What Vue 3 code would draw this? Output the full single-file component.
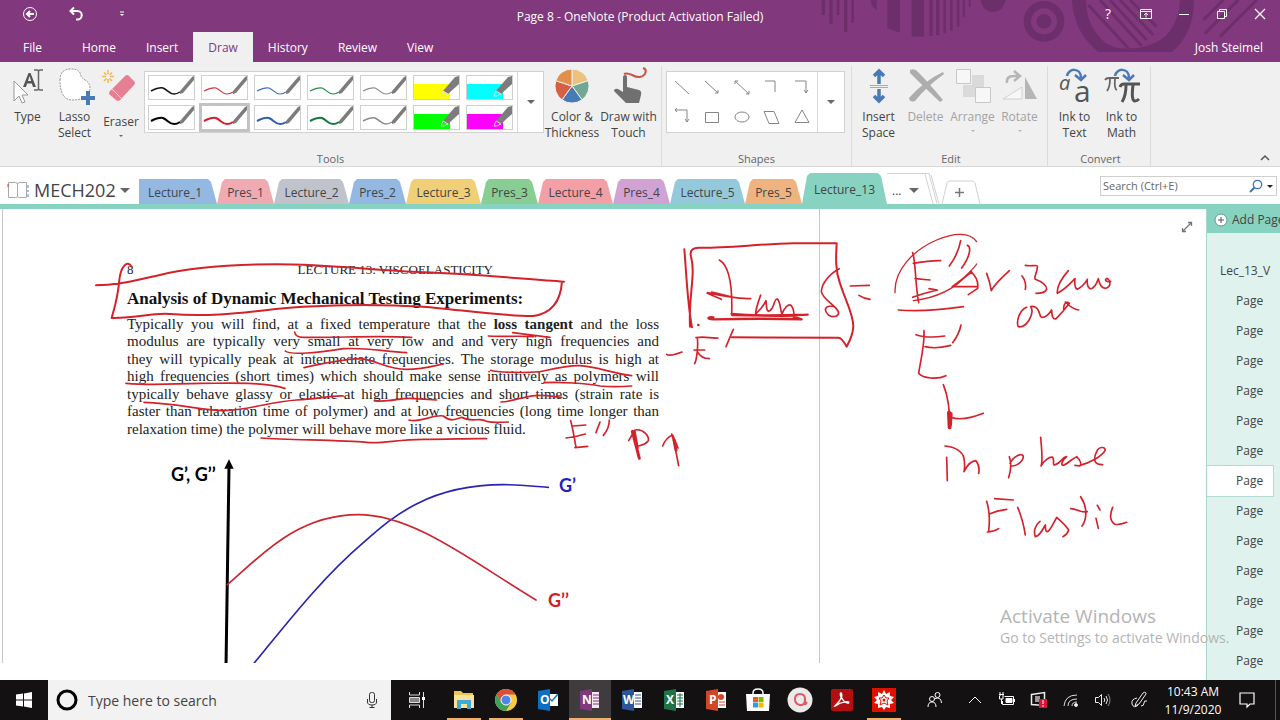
<script setup>
const ribbonTabs = ['Home', 'Insert', 'Draw', 'History', 'Review', 'View']

const pens = [
  { name: 'Black pen', color: '#111', w: 1.5 },
  { name: 'Red pen', color: '#d8323c', w: 1.2 },
  { name: 'Blue pen', color: '#3b6fc0', w: 1.2 },
  { name: 'Green pen', color: '#1f8a4a', w: 1.2 },
  { name: 'Gray pen', color: '#8b8b8b', w: 1.2 },
  { name: 'Yellow highlighter', color: '#ffff00', marker: true },
  { name: 'Cyan highlighter', color: '#00ffff', marker: true },
  { name: 'Thick black pen', color: '#000', w: 2 },
  { name: 'Thick red pen', color: '#d0202c', w: 2, selected: true },
  { name: 'Thick blue pen', color: '#2f5fb5', w: 2 },
  { name: 'Thick green pen', color: '#177a3c', w: 2 },
  { name: 'Thick gray pen', color: '#8b8b8b', w: 1.5 },
  { name: 'Green highlighter', color: '#00ff00', marker: true },
  { name: 'Magenta highlighter', color: '#ff00ff', marker: true },
]

const shapes = [
  { name: 'Line', d: 'M4 5 L18 18' },
  { name: 'Arrow', d: 'M4 5 L17 17 M17 14 V17 H14' },
  { name: 'Double arrow', d: 'M4 5 L18 18 M4 8 V5 H7 M18 15 V18 H15' },
  { name: 'Elbow', d: 'M4 5 H14 V16' },
  { name: 'Elbow arrow', d: 'M4 5 H15 V17 M13 14 L15 17 L17 14' },
  { name: 'Elbow double arrow', d: 'M4 4 H16 V16 M14 13 L16 16 L18 13 M6 2 L4 4 L6 6' },
  { name: 'Rectangle', d: 'M4.500 6.500 H17.500 V16.500 H4.500 Z' },
  { name: 'Ellipse', d: 'M4 11 A7 5 0 0 1 18 11 A7 5 0 0 1 4 11 Z' },
  { name: 'Parallelogram', d: 'M3 5.500 H13 L18 17.500 H8 Z' },
  { name: 'Triangle', d: 'M11 4 L18 16.500 H4 Z' },
]

const sections = [
  { name: 'Lecture_1', color: '#93b8e2', kind: 'first' },
  { name: 'Pres_1', color: '#efabb1', kind: 'small' },
  { name: 'Lecture_2', color: '#c0c3cb', kind: 'large' },
  { name: 'Pres_2', color: '#93b8e2', kind: 'small' },
  { name: 'Lecture_3', color: '#f0cf76', kind: 'large' },
  { name: 'Pres_3', color: '#88cd92', kind: 'small' },
  { name: 'Lecture_4', color: '#f2a0a6', kind: 'large' },
  { name: 'Pres_4', color: '#d2a2d5', kind: 'small' },
  { name: 'Lecture_5', color: '#93c9da', kind: 'large' },
  { name: 'Pres_5', color: '#efb37f', kind: 'small' },
  { name: 'Lecture_13', color: '#87d2c0', kind: 'current' },
]

const pages = Array.from({ length: 13 }, (_, i) => ({ id: i, selected: i === 6 }))
</script>

<template>
  <div class="window">
    <header class="top">
      <svg class="pattern" width="490" height="62" viewBox="0 0 1470 186" aria-hidden="true">
        <g fill="#6d2f6b">
          <path d="M95 0h10v45h-10zM118 0h10v72h-10zM140 0h8v45h-8zM162 0h10v96h-10zM184 0h8v68h-8zM242 0h18v32q-18-14-18-32zM292 0h38v98l-38-14zM365 0h37v110h-37zM418 0h10v108h-10zM438 0h10v106h-10zM460 0h8v100h-8zM480 0h8v92h-8zM500 0h8v80h-8zM518 0h7v50h-7zM536 0h6v20h-6z" />
          <path d="M572 0h75q-8 36-38 36t-37-36z" />
          <circle cx="762" cy="64" r="22" />
          <path d="M846 0h42q0 80 60 130 30 18 60 15 90 0 130-50 30-40 32-95h42q0 100-66 156H925Q850 95 846 0z" />
        </g>
        <circle cx="762" cy="64" r="50" fill="none" stroke="#6d2f6b" stroke-width="22" />
        <path d="M895 15l120 130M930 0l125 138M960 0l110 120M990 0l100 105M1020 0l80 80M1240 60l60-60M1245 100l100-100M1290 110L1400 0" stroke="#6d2f6b" stroke-width="9" />
      </svg>
      <div class="titlebar">
        <div class="quick">
          <button class="plain" aria-label="Back">
            <svg width="16" height="16" viewBox="0 0 16 16" fill="none" stroke="#fff"><circle cx="8" cy="8" r="6.500" /><path d="M12 8H5M8 5L5 8l3 3" stroke-width="2" /></svg>
          </button>
          <button class="plain" aria-label="Undo">
            <svg width="16" height="16" viewBox="0 0 16 16" fill="none" stroke="#fff" stroke-width="2"><path d="M6 1.500L2.500 5 6 8.500M3 5h6.500a4 4 0 0 1 0 8.500H8" /></svg>
          </button>
          <button class="plain" aria-label="Customize quick access">
            <svg width="8" height="8" viewBox="0 0 8 8"><path d="M2 2h4" stroke="#fff" /><path d="M2 4h4L4 6z" fill="#fff" /></svg>
          </button>
        </div>
        <div class="title">Page 8 - OneNote (Product Activation Failed)</div>
        <div class="controls">
          <button class="plain help" aria-label="Help">?</button>
          <button class="plain" aria-label="Ribbon display options">
            <svg width="14" height="12" viewBox="0 0 14 12" fill="none" stroke="#fff"><path d="M1.500 1.500h11v9h-11zM1.500 3.500h11M7 9.500V5.500M5 7l2-2 2 2" /></svg>
          </button>
          <button class="plain" aria-label="Minimize"><svg width="12" height="12" viewBox="0 0 12 12"><path d="M1 6.500h10" stroke="#fff" /></svg></button>
          <button class="plain" aria-label="Restore"><svg width="12" height="12" viewBox="0 0 12 12" fill="none" stroke="#fff"><path d="M1.500 3.500h7v7h-7zM3.500 3.500v-2h7v7h-2" /></svg></button>
          <button class="plain" aria-label="Close"><svg width="12" height="12" viewBox="0 0 12 12"><path d="M1 1l10 10M11 1L1 11" stroke="#fff" stroke-width="1.200" /></svg></button>
        </div>
      </div>
      <nav class="tabs">
        <button class="tab file">File</button>
        <button v-for="t in ribbonTabs" :key="t" class="tab" :class="{ active: t === 'Draw' }">{{ t }}</button>
        <span class="user">Josh Steimel</span>
      </nav>
    </header>

    <div class="ribbon">
      <section class="group tools">
        <div class="items">
          <button class="tool">
            <svg width="40" height="40" viewBox="0 0 40 40">
              <path d="M6 14v20l5-5 3 7 3-1-3-7h6z" fill="#fff" stroke="#999" />
              <path d="M15 20L20.500 6h2L28 20h-3l-1.200-3.500h-4.700L18 20zM20 14h3.200L21.500 9z" fill="#555" />
              <path d="M26 3h3q1.500 0 1.500 2v16q0 2-1.500 2h-3M35 3h-3q-1.500 0-1.500 2M35 23h-3q-1.500 0-1.500-2" fill="none" stroke="#666" stroke-width="1.500" />
            </svg>
            <span>Type</span>
          </button>
          <button class="tool">
            <svg width="40" height="40" viewBox="0 0 40 40">
              <path d="M5 13C5 6 9 2 15 2c8 0 10 2 11 7 1 4 9 4 9 12 0 9-9 12-18 12C8 33 5 24 5 13z" fill="#fff" stroke="#999" stroke-dasharray="2 1" />
              <path d="M31 24h4v5h5v4h-5v5h-4v-5h-5v-4h5z" fill="#4a7ab5" />
            </svg>
            <span>Lasso<br>Select</span>
          </button>
          <button class="tool eraser">
            <svg width="40" height="40" viewBox="0 0 40 40">
              <path d="M7 0v4M7 9v4M1 6.500h4M9 6.500h4M3 2.500l2.500 2.500M11 2.500L8.500 5M3 11l2.500-2.500M11 11L8.500 8.500" stroke="#efb84e" stroke-width="1.500" />
              <path d="M24 6q2-2 4 0l5 5q2 2 0 4L19 30q-2 2-4 0l-6-5q-2-2 0-4z" fill="#e57f93" />
              <path d="M11 19l9 9" stroke="#f9d8de" />
            </svg>
            <span>Eraser</span>
            <i class="caret tiny"></i>
          </button>
          <div class="gallery">
            <div class="cells pens">
              <button v-for="p in pens" :key="p.name" class="cell" :class="{ selected: p.selected }" :aria-label="p.name">
                <svg v-if="p.marker" width="45" height="23" viewBox="0 0 45 23">
                  <rect y="8" width="36" height="15" :fill="p.color" />
                  <path d="M45 0v8L34 18l-5-3L41 1z" fill="#7c7c7c" /><path d="M29 15l5 3-4 2h-3z" :fill="p.color" stroke="#ddd" />
                </svg>
                <svg v-else width="45" height="23" viewBox="0 0 45 23">
                  <path d="M2 15c4-2 8-4 12-3 5 2 6 6 11 6q3 0 6-2" fill="none" :stroke="p.color" :stroke-width="p.w" />
                  <path d="M45 0v4L34 17l-3 1 0-3L43 1z" fill="#7c7c7c" />
                </svg>
              </button>
            </div>
            <button class="more" aria-label="More pens"><i class="caret"></i></button>
          </div>
          <button class="tool wide">
            <svg width="40" height="40" viewBox="0 0 40 40" stroke="#f0f0f0">
              <path d="M20 19V2a17 17 0 0 1 16.200 11.700z" fill="#ecc27a" /><path d="M20 19l16.200-5.300A17 17 0 0 1 30 32.800z" fill="#72a893" />
              <path d="M20 19l10 13.800a17 17 0 0 1-20 0z" fill="#4a7ab5" /><path d="M20 19L10 32.800A17 17 0 0 1 3.800 13.700z" fill="#d65f46" /><path d="M20 19L3.800 13.700A17 17 0 0 1 20 2z" fill="#e38f4c" />
            </svg>
            <span>Color &amp;<br>Thickness</span>
          </button>
          <button class="tool wide">
            <svg width="40" height="40" viewBox="0 0 40 40">
              <path d="M14 10q0-2 2-2t2 2v10l12 3q3 1 2 5l-2 8H17L5 24q0-3 4-2l5 3z" fill="#707070" />
              <path d="M15 7c6-3 9 4 16 3 7-2 7-8 3-9" fill="none" stroke="#cc5442" stroke-width="2" />
            </svg>
            <span>Draw with<br>Touch</span>
          </button>
        </div>
        <div class="group-name">Tools</div>
      </section>
      <section class="group shapes">
        <div class="items">
          <div class="gallery">
            <div class="cells shape-cells">
              <button v-for="s in shapes" :key="s.name" class="shape" :aria-label="s.name">
                <svg width="22" height="22" viewBox="0 0 22 22"><path :d="s.d" fill="none" stroke="#858585" /></svg>
              </button>
            </div>
            <button class="more" aria-label="More shapes"><i class="caret"></i></button>
          </div>
        </div>
        <div class="group-name">Shapes</div>
      </section>
      <section class="group edit">
        <div class="items">
          <button class="tool">
            <svg width="40" height="40" viewBox="0 0 40 40" fill="none"><path d="M20 17V4M15 9l5-5 5 5M20 22v11M15 29l5 5 5-5" stroke="#4a7ab5" stroke-width="3.500" /><path d="M11 18.500h18M11 20.500h18" stroke="#aaa" /></svg>
            <span>Insert<br>Space</span>
          </button>
          <button class="tool off">
            <svg width="40" height="40" viewBox="0 0 40 40" fill="#adadad"><path d="M4 3q5-2 8 2 10 10 25 28l-3 2Q18 20 4 6zM3 31Q18 14 37 5l1 2Q20 20 9 34q-5 2-6-3z" /></svg>
            <span>Delete</span>
          </button>
          <button class="tool off">
            <svg width="40" height="40" viewBox="0 0 40 40"><path d="M19 8h12v12H19zM10 18h13v12H10z" fill="#dadada" /><path d="M3.500 2.500h14v14h-14zM22.500 20.500h15v15h-15z" fill="#f7f7f7" stroke="#c8c8c8" /></svg>
            <span>Arrange</span>
            <i class="caret tiny"></i>
          </button>
          <button class="tool off">
            <svg width="40" height="40" viewBox="0 0 40 40"><path d="M25 10v22h12z" fill="#b5b5b5" /><path d="M22 20v12H3z" fill="#f7f7f7" stroke="#d0d0d0" /><path d="M7 16c-1-8 6-7 11-7M14 4l6 5-6 5" fill="none" stroke="#b5b5b5" stroke-width="2.500" /></svg>
            <span>Rotate</span>
            <i class="caret tiny"></i>
          </button>
        </div>
        <div class="group-name">Edit</div>
      </section>
      <section class="group convert">
        <div class="items">
          <button class="tool">
            <svg class="spill" width="40" height="40" viewBox="0 0 40 40"><path d="M12 9c1-8 14-9 14 2M20 8l6 5 5-5" fill="none" stroke="#4a7ab5" stroke-width="2.500" /><text x="4" y="23" class="ga italic">a</text><text x="19" y="35" class="ga big">a</text></svg>
            <span>Ink to<br>Text</span>
          </button>
          <button class="tool">
            <svg width="40" height="40" viewBox="0 0 40 40"><path d="M13 9c1-8 14-9 14 2M21 8l6 5 5-5" fill="none" stroke="#4a7ab5" stroke-width="2.500" /><path d="M3 13q1-2 4-2h10M8 12q0 8-3 12M13 12q-1 10 2 11" fill="none" stroke="#666" stroke-width="1.800" /><path d="M18 20q1-3 4-3h16M24 18q0 11-4 17M31 18q-2 16 2 16 2 0 4-2" fill="none" stroke="#555" stroke-width="3" /></svg>
            <span>Ink to<br>Math</span>
          </button>
        </div>
        <div class="group-name">Convert</div>
      </section>
      <button class="collapse" aria-label="Collapse the ribbon"><svg width="10" height="8" viewBox="0 0 10 8"><path d="M1 6l4-4 4 4" fill="none" stroke="#555" stroke-width="1.500" /></svg></button>
    </div>

    <div class="sections">
      <button class="notebook">
        <svg width="24" height="20" viewBox="0 0 24 20" fill="none" stroke="#aaa"><path d="M2.500 2.500h7q2 0 2 2v12q0 1-2 1h-7zM20.500 2.500h-7q-2 0-2 2v12q0 1 2 1h7z" /><path d="M2 4v3" stroke="#d33" /><path d="M22 5v3M22 10v2M22 14v3" stroke="#48a" /></svg>
        <span>MECH202</span><i class="caret book"></i>
      </button>
      <button v-for="s in sections" :key="s.name" class="section-tab" :class="s.kind" :style="{ background: s.color }">{{ s.name }}</button>
      <button class="overflow" aria-label="More sections">
        <svg width="54" height="31" viewBox="0 0 54 31" fill="none" stroke="#d2d2d2"><path d="M0 .500h42l8 30M44 2l8 29M38 1l8 30" /></svg>
        <span>...</span><i class="caret section"></i>
      </button>
      <button class="new-section" aria-label="New section">
        <svg width="40" height="24" viewBox="0 0 40 24" fill="none"><path d="M1 24L6 3q1-2 3-2h22q2 0 3 2l5 21" stroke="#cfcfcf" /><path d="M18.500 8v9M14 12.500h9" stroke="#777" stroke-width="1.500" /></svg>
      </button>
      <form class="search" @submit.prevent>
        <input type="text" aria-label="Search" placeholder="Search (Ctrl+E)">
        <svg width="14" height="14" viewBox="0 0 14 14" fill="none" stroke="#3f73b8"><circle cx="8.500" cy="5.500" r="4.200" stroke-width="1.300" /><path d="M5.500 8.500L1 13" stroke-width="2" /></svg>
        <i class="caret dark"></i>
      </form>
    </div>

    <main class="workspace">
      <div class="canvas">
        <article class="paper">
          <div class="running"><span>8</span><span class="running-title">LECTURE 13: VISCOELASTICITY</span></div>
          <h1>Analysis of Dynamic Mechanical Testing Experiments:</h1>
          <p>
            <span>Typically you will find, at a fixed temperature that the <b>loss tangent</b> and the loss</span>
            <span>modulus are typically very small at very low and and very high frequencies and</span>
            <span>they will typically peak at intermediate frequencies. The storage modulus is high at</span>
            <span>high frequencies (short times) which should make sense intuitively as polymers will</span>
            <span>typically behave glassy or elastic at high frequencies and short times (strain rate is</span>
            <span>faster than relaxation time of polymer) and at low frequencies (long time longer than</span>
            <span class="last">relaxation time) the polymer will behave more like a vicious fluid.</span>
          </p>
        </article>
        <svg class="ink" width="1206" height="454" viewBox="0 209 1206 454" fill="none" stroke-linecap="round" stroke-linejoin="round">
          <g transform="translate(150 450) scale(.333333)">
            <path d="M228 650L237 50" stroke="#000" stroke-width="9" stroke-linecap="butt" />
            <path d="M223 56L237 28L251 56z" fill="#000" />
            <path d="M312 640C420 508 520 380 640 278C720 208 830 104 1060 104C1110 104 1150 108 1195 112" stroke="#2a22b4" stroke-width="5" />
            <path d="M232 404C330 320 440 194 625 194C790 194 960 330 1158 450" stroke="#cb2630" stroke-width="5" />
          </g>
          <g class="labels"><text x="171" y="481" fill="#000">G’, G’’</text><text x="559" y="492" fill="#1f1fc4">G’</text><text x="548" y="607" fill="#d41c24">G’’</text></g>
          <g stroke="#d3222a" stroke-width="5">
            <g transform="translate(90 210) scale(.333333)">
              <path d="M18 226C80 226 130 212 200 197C300 172 420 163 560 163C700 163 850 180 1000 187C1150 192 1300 207 1422 215M1416 215C1412 270 1390 310 1330 318C1250 320 1100 298 1000 290C900 284 750 284 640 290C520 296 400 325 240 312C180 308 150 325 65 324C75 290 85 250 88 210C92 170 112 148 125 170" stroke-width="6" />
              <path d="M614 366Q616 382 640 382C740 384 850 376 965 382M586 423C600 436 690 428 760 416C830 412 880 424 950 428M642 473C700 460 760 448 810 446C860 450 890 478 950 478C1000 478 1030 468 1060 462M108 520C200 528 260 520 330 520C420 520 520 515 585 535M162 577C260 580 330 600 400 602C480 600 540 575 620 570C680 568 720 556 760 558M855 572C890 578 930 564 960 565L1040 570M513 684C600 690 750 690 830 697C880 702 920 688 1000 688C1080 688 1140 685 1190 686" />
            </g>
            <g transform="translate(400 210) scale(.333333)">
              <path d="M265 378C300 382 340 376 400 380M338 368L450 382M272 481C290 488 400 490 430 483C480 472 510 465 540 467C590 470 630 488 695 497M432 518C480 515 560 520 600 528C640 532 670 530 695 528M303 576C340 575 380 555 420 556C450 556 470 562 485 562M27 630C60 640 100 612 130 618C150 635 165 630 185 622C215 640 240 620 260 634C285 640 300 636 325 636" />
              <path d="M512 632C520 660 522 680 528 712M520 648L557 645M498 684Q530 680 556 672M525 713L563 709M600 636L588 668M628 630Q628 655 610 676M686 692L705 660C730 655 748 680 745 692C735 705 725 705 715 708M815 672C825 700 828 730 836 767M788 708C795 690 805 680 818 675C825 690 830 705 834 714" />
              <path d="M697 664L718 745M703 665L712 715M822 690L828 720" stroke-width="9" />
            </g>
            <g transform="translate(660 210) scale(.333333)">
              <path d="M73 118C80 200 82 280 96 352M90 350C85 260 108 190 93 140C88 120 100 112 120 113C200 114 300 102 400 100L530 100C528 140 525 180 540 220C555 270 580 310 580 350C578 380 565 400 560 410C552 395 545 383 535 383L215 382" stroke-width="6" />
              <path d="M178 150C205 165 218 220 215 312M142 248C180 255 230 266 272 266M155 246L220 262M142 250L184 268M302 255C295 275 286 300 287 312C300 300 312 285 318 272C320 290 318 300 325 304C345 300 340 265 352 267C362 275 360 300 366 312C372 295 385 280 393 286C402 295 402 312 402 318M538 176C510 190 485 220 484 245C490 270 520 280 535 305C540 318 520 325 505 315C490 300 495 288 515 288Q533 292 536 310M20 433Q30 440 66 426M108 383C140 378 150 386 174 384M112 384C115 410 110 450 104 461M102 420L134 420M112 425C120 440 130 446 148 446M220 358L198 410M571 228L628 226M597 256Q610 265 630 268" />
              <path d="M215 312C300 320 370 316 443 314M216 315L400 318M160 322C140 320 140 328 160 328C240 326 330 325 425 328L400 320" stroke-width="7" />
              <circle cx="115" cy="345" r="2" stroke-width="4" />
            </g>
            <g transform="translate(880 210) scale(.333333)">
              <path d="M45 248C42 180 100 120 170 90C220 68 270 65 290 95M100 272C180 262 230 230 260 195C275 180 285 170 290 162" stroke-width="4" />
              <path d="M98 128C108 160 105 220 116 278M100 160C130 155 160 151 182 152M105 206L150 210M98 262C130 250 150 245 172 240L147 236M242 92C238 115 225 145 208 168M262 106C275 110 270 140 245 174M217 230L293 230M272 184C290 200 295 220 293 235L265 254M217 230L275 186M55 300C120 306 180 300 250 290" />
              <path d="M320 190C328 210 332 230 334 242C345 220 370 200 388 182M426 198Q440 215 436 238M436 166C450 170 470 164 472 168C474 185 460 200 466 208C485 215 500 225 500 238C495 250 480 250 468 250M565 182C545 205 530 230 532 250C560 235 575 215 585 206C583 225 585 235 592 238C610 228 618 215 622 208C620 225 625 238 635 236C648 230 652 215 655 206C658 225 665 235 678 235C695 228 692 210 680 205C672 210 680 218 692 214M440 292C418 300 408 335 415 350C440 355 465 310 452 290C475 285 478 310 482 320C495 330 512 305 515 300C515 320 520 330 528 326C545 310 560 290 568 280C560 270 548 285 552 300M556 276C570 290 580 298 596 300" />
              <path d="M108 374C130 382 165 382 194 378M132 362C135 400 122 450 116 490C130 505 170 510 198 497M135 410C160 416 190 412 212 406M243 345C240 360 228 385 218 398M190 524C205 560 210 610 210 655M212 622C240 632 280 622 310 610" />
              <path d="M207 608L209 652M212 612L210 645" stroke-width="12" />
              <path d="M200 742L202 812M195 708C225 710 248 725 252 745C254 760 255 775 252 785C262 765 275 752 288 752C298 765 298 780 296 790M388 740C395 760 392 785 386 803M390 760C400 738 425 728 430 738C430 755 410 768 396 768M482 682C484 710 490 750 483 768C492 752 510 738 518 742C525 752 515 768 526 764C545 758 545 742 560 740C548 750 540 766 550 766C565 760 578 745 590 740C600 750 605 762 600 768L585 766M600 766C630 758 665 740 675 722C678 708 655 710 650 725C640 745 640 765 668 764" />
              <path d="M320 874C328 900 330 930 326 962M344 866L400 870M328 912Q350 902 380 898M322 966Q340 966 356 956M413 892C425 920 432 950 436 975M480 934C465 945 460 965 466 980C480 978 490 955 496 945C496 965 500 970 508 960C520 945 525 930 530 922C545 935 560 950 566 960C562 975 552 978 549 980M602 860C622 890 622 925 606 948M572 896C590 895 600 910 622 905M648 925L655 955M652 886L660 900M698 892C688 915 690 935 705 943Q720 945 740 937" />
            </g>
          </g>
        </svg>
        <button class="expand" aria-label="Full page view"><svg width="12" height="12" viewBox="0 0 12 12" fill="none" stroke="#777"><path d="M1.500 10.500l9-9M7 1.500h3.500V5M1.500 7v3.500H5" stroke-width="1.300" /></svg></button>
        <div class="activate"><strong>Activate Windows</strong><span>Go to Settings to activate Windows.</span></div>
      </div>
      <aside class="pages">
        <button class="add-page"><svg width="14" height="14" viewBox="0 0 14 14"><circle cx="7" cy="7" r="6" fill="#fff" stroke="#5e9f90" /><path d="M7 4v6M4 7h6" stroke="#555" /></svg><span>Add Page</span></button>
        <button class="page-row lead">Lec_13_V</button>
        <button v-for="p in pages" :key="p.id" class="page-row" :class="{ selected: p.selected }">Page</button>
      </aside>
    </main>

    <footer class="taskbar">
      <button class="start" aria-label="Start"><svg width="16" height="16" viewBox="0 0 16 16" fill="#fff"><path d="M0 2.500L7 1.500V7.600H0zM8 1.400L16 0v7.600H8zM0 8.400h7v6.100L0 13.500zM8 8.400h8V16l-8-1.400z" /></svg></button>
      <label class="find">
        <svg width="22" height="22" viewBox="0 0 22 22"><circle cx="11" cy="11" r="9" fill="none" stroke="#000" stroke-width="3" /></svg>
        <input type="text" placeholder="Type here to search" aria-label="Type here to search">
        <svg width="12" height="18" viewBox="0 0 12 18" fill="none" stroke="#333"><rect x="3.500" y="1.500" width="5" height="10" rx="2" /><path d="M1.500 8v3q0 3 4.500 3t4.500-3V8M6 14v2.500M3.500 16.500h5" /></svg>
      </label>
      <button class="app view" aria-label="Task View"><svg width="18" height="18" viewBox="0 0 18 18" fill="none" stroke="#ddd"><path d="M1.500 1v3h10V1M1.500 17v-3h10v3M15.500 1v16" /><path d="M1.500 6.500h10v5h-10z" fill="#888" /><path d="M14 6h3v3h-3z" fill="#fff" stroke="none" /></svg></button>
      <button class="app open" aria-label="File Explorer"><svg width="22" height="22" viewBox="0 0 22 22"><path d="M1 2h7l2 2h10v15H1z" fill="#edc45b" /><path d="M1 6h20v13H1z" fill="#fbe294" /><path d="M4 11h14v9h-4v-5H8v5H4z" fill="#3fa9da" /></svg></button>
      <button class="app open" aria-label="Chrome"><svg width="22" height="22" viewBox="0 0 22 22"><circle cx="11" cy="11" r="11" fill="#f7cb45" /><path d="M1.500 5.500A11 11 0 0 1 20.500 5.500H11L6 13z" fill="#d94f3d" /><path d="M1.500 5.500A11 11 0 0 0 11 22l5-8.500-9.500 0z" fill="#3fa158" /><circle cx="11" cy="11" r="5" fill="#4c86ea" stroke="#fff" /></svg></button>
      <button class="app" aria-label="Outlook"><svg width="22" height="22" viewBox="0 0 22 22"><path d="M11 5h10v12H11z" fill="#fff" /><path d="M11 8l4 4 6-7" fill="none" stroke="#1377c8" stroke-width="1.500" /><path d="M1 2l12-2v22L1 20z" fill="#0d6fc1" /><text x="3" y="15" class="glyph">O</text></svg></button>
      <button class="app open current" aria-label="OneNote"><svg width="22" height="22" viewBox="0 0 22 22"><path d="M11 3h9v16h-9z" fill="#f3e7f2" /><path d="M14 6h6M14 9h6M14 12h6M14 15h6" stroke="#80397b" /><path d="M1 2l12-2v22L1 20z" fill="#80397b" /><text x="3" y="15" class="glyph">N</text></svg></button>
      <button class="app" aria-label="Word"><svg width="22" height="22" viewBox="0 0 22 22"><path d="M11 3h10v16H11z" fill="#fff" /><path d="M14 6h6M14 9h6M14 12h6M14 15h6" stroke="#2b579a" /><path d="M1 2l12-2v22L1 20z" fill="#2b579a" /><text x="2" y="15" class="glyph">W</text></svg></button>
      <button class="app" aria-label="Excel"><svg width="22" height="22" viewBox="0 0 22 22"><path d="M11 3h10v16H11z" fill="#fff" /><path d="M14 6h6M14 9h6M14 12h6M14 15h6M17 4v14" stroke="#1f7346" /><path d="M1 2l12-2v22L1 20z" fill="#1f7346" /><text x="3" y="15" class="glyph">X</text></svg></button>
      <button class="app" aria-label="PowerPoint"><svg width="22" height="22" viewBox="0 0 22 22"><path d="M11 3h10v16H11z" fill="#fff" /><circle cx="16" cy="8" r="3" fill="#d04727" /><path d="M14 13h6M14 16h6" stroke="#d04727" /><path d="M1 2l12-2v22L1 20z" fill="#d04727" /><text x="4" y="15" class="glyph">P</text></svg></button>
      <button class="app" aria-label="Microsoft Store"><svg width="24" height="24" viewBox="0 0 24 24"><path d="M7 8V5q0-4 5-4t5 4v3" fill="none" stroke="#fff" stroke-width="1.500" /><path d="M0 6h24l-1 17H1z" fill="#fff" /><path d="M7 9h5v5H7z" fill="#ee5a2c" /><path d="M12.500 9h5v5h-5z" fill="#7fba00" /><path d="M7 14.500h5v5H7z" fill="#22a2e8" /><path d="M12.500 14.500h5v5h-5z" fill="#f9b800" /></svg></button>
      <button class="app" aria-label="Reader"><svg width="26" height="26" viewBox="0 0 26 26"><circle cx="13" cy="13" r="12.500" fill="#ece9e9" /><path d="M18 18V12q0-5-5-5t-5 5 5 6 5-6M18 18q1-2 2-3" fill="none" stroke="#df5a62" stroke-width="2" /></svg></button>
      <button class="app" aria-label="Acrobat"><svg width="22" height="22" viewBox="0 0 22 22"><rect width="22" height="22" rx="2" fill="#b30f10" /><path d="M4 17c3-3 8-9 6.500-12.500-1-1.500-2 1 0 4 2 4 4 6 7 5.500 2-2-7-2-13 3z" fill="none" stroke="#fff" stroke-width="1.500" /></svg></button>
      <button class="app open" aria-label="Mathematica"><svg width="24" height="24" viewBox="0 0 24 24"><rect width="24" height="24" fill="#dd1100" /><path d="M12 2l2 4 4-2v4l4 1-3 3 3 3-4 1v4l-4-1-2 3-2-3-4 1v-4l-4-1 3-3-3-3 4-1V4l4 2z" fill="#fff" /><path d="M12 7l2 3 3 0-2 3 1 4-4-2-4 2 1-4-2-3h3z" fill="none" stroke="#dd1100" /><circle cx="12" cy="12" r="1.500" fill="#dd1100" /></svg></button>
      <div class="tray">
        <button class="slot people" aria-label="People"><svg width="18" height="18" viewBox="0 0 18 18" fill="none" stroke="#fff"><circle cx="6" cy="8" r="2.500" /><path d="M2 16q0-5 4-5t4 5" /><circle cx="11.500" cy="4" r="2.500" /><path d="M9 7.500q6-2 6.500 4.500" /></svg></button>
        <button class="slot" aria-label="Show hidden icons"><svg width="14" height="10" viewBox="0 0 14 10" fill="none" stroke="#fff"><path d="M1 8l6-6 6 6" /></svg></button>
        <button class="slot" aria-label="Battery"><svg width="18" height="16" viewBox="0 0 18 16" fill="none" stroke="#fff"><path d="M6.500 4.500h9v8H4.500V9M16.500 7v3M1 2.500h5M2 0v4M5 0v4M1.500 4v3h3.500V4M3.500 7v5" /><path d="M8 6.500h6v4H8z" fill="#fff" /></svg></button>
        <button class="slot" aria-label="Security"><svg width="18" height="18" viewBox="0 0 18 18"><path d="M1.500 3.500l13-2v13l-13-1z" fill="none" stroke="#eee" stroke-width="1.500" /><path d="M5 5h5v6H5z" fill="#999" /><path d="M9 8h8v9H9z" fill="#dc1434" /><path d="M13 9v4M13 14v2" stroke="#fff" /></svg></button>
        <button class="slot" aria-label="Wi-Fi"><svg width="16" height="16" viewBox="0 0 16 16" fill="none" stroke="#ddd"><path d="M1 14Q2 3 14 3M5 14Q5 7 14 7M9 14Q9 10 14 10" /><circle cx="13" cy="13" r="1.500" fill="#fff" /></svg></button>
        <button class="slot" aria-label="Volume"><svg width="18" height="16" viewBox="0 0 18 16" fill="none" stroke="#eee"><path d="M1.500 5.500h3l3-3v11l-3-3h-3zM10 6q1.500 2 0 4M12 4q3 4 0 8" /><path d="M14 2q4 6 0 12" stroke="#888" /></svg></button>
        <button class="slot pen" aria-label="Windows Ink"><svg width="18" height="18" viewBox="0 0 18 18" fill="none" stroke="#eee"><path d="M6 12L13 2q3-2 3 1L9 13l-4 2zM7 7Q1 8 2 13q2 5 6 1M11 15q3 0 3-3t3-2" /></svg></button>
        <button class="clock"><span>10:43 AM</span><span>11/9/2020</span></button>
        <button class="slot notice" aria-label="Notifications"><svg width="16" height="17" viewBox="0 0 16 17" fill="none" stroke="#fff" stroke-width="1.200"><path d="M1 1h14v11h-4l-3 3v-3H1z" /></svg></button>
        <button class="desktop" aria-label="Show desktop"></button>
      </div>
    </footer>
  </div>
</template>

<style scoped>
.window { display: flex; flex-direction: column; height: 100vh; overflow: hidden; background: #fff; color: #444; font: 12px/16px "Open Sans", "Noto Sans", sans-serif; }
button { font: inherit; color: inherit; background: none; border: 0; padding: 0; margin: 0; }
input { font: inherit; border: 0; background: none; padding: 0; min-width: 0; outline: 0; }
svg { display: block; flex: none; }
.spill { overflow: visible; }
.caret { display: block; border: 4px solid transparent; border-top-color: #666; border-bottom: 0; width: 0; height: 0; }
.caret.tiny { border-width: 2px; border-bottom: 0; }
.caret.book, .caret.section { border-width: 5px; border-bottom: 0; }
.caret.dark { border-width: 3px; border-bottom: 0; border-top-color: #222; }

.top { position: relative; flex: none; background: #82387c; color: #fff; }
.pattern { position: absolute; right: 0; top: 0; }
.titlebar { position: relative; display: grid; grid-template-columns: 1fr auto 1fr; align-items: center; height: 32px; }
.title { padding-top: 2px; }
.quick { display: flex; gap: 30px; padding-left: 22px; align-items: center; padding-bottom: 4px; }
.quick button:last-child { margin-left: 4px; }
.controls { display: flex; justify-content: flex-end; padding: 0 1px 4px 0; }
.plain { display: grid; place-items: center; }
.controls .plain { width: 38px; }
.help { font-size: 14px; }
.tabs { position: relative; display: flex; height: 30px; }
.tab { padding: 2px 15px 0; }
.tab.file { padding: 2px 25px 0 23px; }
.tab.active { background: #f0f0f0; color: #82387c; }
.user { margin-left: auto; padding: 8px 17px 0 0; }

.ribbon { display: flex; flex: none; height: 104px; background: #f0f0f0; border-bottom: 1px solid #d8d8d8; position: relative; }
.group { display: flex; flex-direction: column; justify-content: space-between; border-right: 1px solid #dcdcdc; margin: 4px 0 0; box-sizing: border-box; }
.tools { width: 662px; }
.shapes { width: 190px; }
.edit { width: 196px; padding-left: 3px; }
.convert { width: 103px; padding-left: 3px; }
.items { display: flex; align-items: flex-start; }
.tools .items { padding-left: 4px; }
.shapes .items { padding-left: 4px; }
.group-name { text-align: center; font-size: 11px; line-height: 14px; color: #666; }
.tool { width: 47px; display: flex; flex-direction: column; align-items: center; white-space: nowrap; padding-top: 1px; }
.tool svg { margin-bottom: 2px; }
.tool span { line-height: 16px; }
.tool .caret { margin-top: 5px; }
.eraser { padding-top: 4px; width: 46px; }
.eraser svg { margin-bottom: 4px; }
.wide { width: 56px; }
.wide + .wide { width: 57px; }
.off { color: #a3a3a3; }
.off .caret { border-top-color: #b5b5b5; }
.gallery { display: flex; border: 1px solid #d2d2d2; background: #fff; margin-top: 5px; height: 60px; }
.cells { display: grid; }
.pens { grid-template-columns: repeat(7, 47px); gap: 5px 6px; padding: 3px 4px 3px 3px; }
.cell { height: 25px; border: 1px solid #cfcfcf; overflow: hidden; }
.cell.selected { outline: 3px solid #c3c3c3; outline-offset: -1px; }
.more { width: 26px; border-left: 1px solid #d8d8d8; display: grid; place-items: center; }
.shape-cells { grid-template-columns: repeat(5, 30px); grid-template-rows: 30px 30px; }
.shape { display: grid; place-items: center; }
.shapes .more { width: 27px; }
.collapse { margin: auto 10px 4px auto; }
.ga { font: 20px "Open Sans", sans-serif; fill: #555; }
.ga.italic { font-style: italic; }
.ga.big { font-size: 30px; }

.sections { display: flex; align-items: flex-end; flex: none; height: 37px; border-bottom: 5px solid #87d2c0; }
.notebook { display: flex; align-items: center; width: 139px; height: 28px; padding-left: 6px; box-sizing: border-box; font-size: 18px; gap: 4px; }
.notebook span { line-height: 24px; }
.section-tab { height: 25px; width: 75px; flex: none; padding-top: 2px; clip-path: polygon(0 100%, 5px 3px, 8px 0, calc(100% - 9px) 0, calc(100% - 6px) 3px, 100% 100%); }
.section-tab.first { width: 78px; padding-right: 6px; clip-path: polygon(0 100%, 0 0, calc(100% - 9px) 0, calc(100% - 6px) 3px, 100% 100%); }
.section-tab.small { width: 57px; }
.section-tab.current { width: 85px; height: 31px; }
.overflow { position: relative; width: 54px; height: 31px; display: flex; align-items: center; gap: 8px; padding: 4px 0 0 5px; box-sizing: border-box; }
.overflow svg { position: absolute; left: 0; top: 0; }
.search { display: flex; align-items: center; gap: 4px; width: 177px; height: 20px; box-sizing: border-box; border: 1px solid #cfcfcf; margin: 0 3px 8px auto; padding: 0 3px 0 2px; }
.search input { flex: 1; font-size: 11px; }
.search input::placeholder { color: #666; opacity: 1; }

.workspace { display: flex; flex: 1; min-height: 0; }
.canvas { position: relative; flex: 1; min-width: 0; }
.paper { position: absolute; left: 2px; top: 0; bottom: 17px; width: 818px; box-sizing: border-box; border: solid #c8c8c8; border-width: 0 1px; padding: 53px 160px 0 124px; font-family: "Liberation Serif", serif; color: #222; }
.running { display: flex; font-size: 13px; line-height: 16px; }
.running-title { margin-left: 164px; }
h1 { margin: 11px 0 7px; font-size: 17px; line-height: 20px; color: #111; white-space: nowrap; }
p { margin: 0; display: grid; grid-template-rows: repeat(7, 1fr); height: 122px; font-size: 15px; }
p span { text-align: justify; text-align-last: justify; line-height: 17px; }
p .last { text-align-last: left; }
.ink { position: absolute; left: 0; top: 0; }
.labels { font: 700 18px Lato, sans-serif; }
.expand { position: absolute; right: 13px; top: 12px; }
.activate { position: absolute; left: 1000px; top: 394px; display: grid; white-space: nowrap; color: #b4b4b4; z-index: 2; }
.activate strong { font-weight: 400; font-size: 19px; line-height: 26px; }
.activate span { font-size: 14px; line-height: 18px; }
.pages { width: 74px; flex: none; background: #dff2ee; overflow: hidden; box-sizing: border-box; border-left: 1px solid #a9d9cd; }
.add-page { display: flex; align-items: center; gap: 4px; width: 100%; height: 24px; padding: 0 0 3px 7px; background: #87d2c0; white-space: nowrap; margin-bottom: 23px; }
.page-row { display: block; width: 66px; height: 30px; padding-left: 29px; text-align: left; font-size: 12px; }
.page-row.lead { padding-left: 13px; }
.page-row.selected { background: #fff; outline: 1px solid #b5dcd2; }

.taskbar { display: flex; flex: none; height: 40px; background: #141112; color: #fff; }
.start { width: 48px; display: grid; place-items: center; }
.find { display: flex; align-items: center; gap: 10px; width: 343px; padding: 0 13px 0 8px; box-sizing: border-box; background: #f2f2f2; }
.find input { flex: 1; font-size: 14px; padding-top: 2px; }
.find input::placeholder { color: #444; opacity: 1; }
.app { width: 42px; display: grid; place-items: center; flex: none; box-sizing: border-box; border-bottom: 2px solid transparent; padding-top: 2px; position: relative; }
.app.view { width: 52px; }
.app.open::after { content: ""; position: absolute; left: 4px; right: 4px; bottom: -2px; height: 2px; background: #efb06c; }
.app.current { background: #403c3e; }
.app.current::after { left: 0; right: 0; }
.glyph { font: 700 12px "Open Sans", sans-serif; fill: #fff; }
.tray { display: flex; margin-left: auto; }
.slot { width: 32px; display: grid; place-items: center; }
.slot.people { width: 48px; }
.slot.pen, .slot.notice { width: 40px; }
.clock { width: 68px; display: flex; flex-direction: column; justify-content: center; font-size: 12px; line-height: 18px; padding-top: 2px; }
.desktop { width: 5px; margin-left: 8px; border-left: 1px solid #555; }
</style>

<style>
html, body { margin: 0; background: #fff; }
</style>
